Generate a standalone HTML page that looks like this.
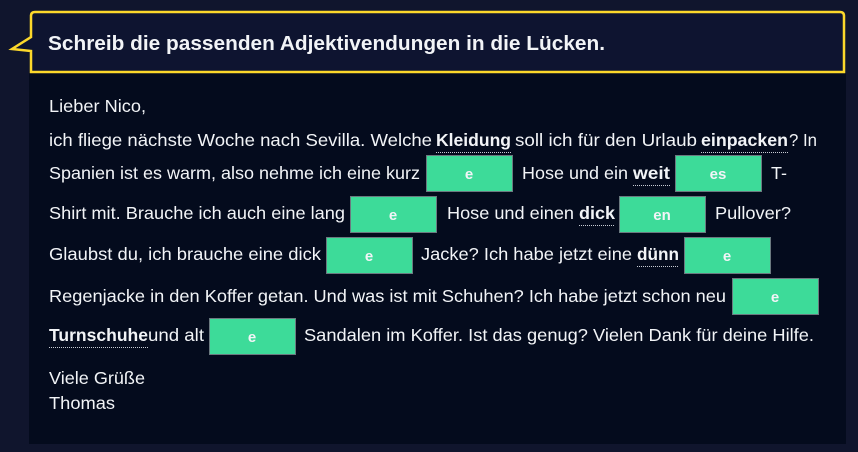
<!DOCTYPE html>
<html><head><meta charset="utf-8"><style>
html,body{margin:0;padding:0;background:#10152d;width:858px;height:452px;overflow:hidden}
svg{display:block}
text{font-family:"Liberation Sans",sans-serif;fill:#f2f4f7;font-size:17.5px}
.b{font-weight:bold}
.s{font-size:15px}
</style></head><body>
<svg width="858" height="452" viewBox="0 0 858 452">
<rect x="0" y="0" width="858" height="452" fill="#10152d"/>
<rect x="29" y="73" width="817" height="371" fill="#040b1d"/>
<path d="M31 37 V16 Q31 12 35 12 H840 Q844 12 844 16 V72 H31 V51 L12 49 L31 37 Z" fill="#0e1430" stroke="#fcd82b" stroke-width="2.5" stroke-linejoin="miter"/>
<text class="b" x="48" y="50" style="font-size:20.5px" textLength="557" lengthAdjust="spacingAndGlyphs">Schreib die passenden Adjektivendungen in die Lücken.</text>

<g stroke="#6b7a80" stroke-width="1" fill="#3ddb99">
<rect x="426.5" y="155.5" width="86" height="36"/>
<rect x="675.5" y="155.5" width="86" height="36"/>
<rect x="350.5" y="196.5" width="86" height="36"/>
<rect x="619.5" y="196.5" width="86" height="36"/>
<rect x="326.5" y="237.5" width="86" height="36"/>
<rect x="684.5" y="237.5" width="86" height="36"/>
<rect x="732.5" y="278.5" width="86" height="36"/>
<rect x="209.5" y="318.5" width="86" height="36"/>
</g>
<g text-anchor="middle">
<text x="469" y="179" class="b s">e</text>
<text x="718" y="179" class="b s">es</text>
<text x="393" y="220" class="b s">e</text>
<text x="662" y="220" class="b s">en</text>
<text x="369" y="261" class="b s">e</text>
<text x="727" y="261" class="b s">e</text>
<text x="775" y="302" class="b s">e</text>
<text x="252" y="342" class="b s">e</text>
</g>

<text x="49" y="112" textLength="97" lengthAdjust="spacingAndGlyphs">Lieber Nico,</text>

<text x="49" y="146" textLength="383" lengthAdjust="spacingAndGlyphs">ich fliege nächste Woche nach Sevilla. Welche</text>
<text class="b" x="436" y="146" textLength="75" lengthAdjust="spacingAndGlyphs">Kleidung</text>
<text x="515" y="146" textLength="182" lengthAdjust="spacingAndGlyphs">soll ich für den Urlaub</text>
<text class="b" x="701" y="146" textLength="87" lengthAdjust="spacingAndGlyphs">einpacken</text>
<text x="789" y="146" textLength="28" lengthAdjust="spacingAndGlyphs">? In</text>

<text x="49" y="179" textLength="371" lengthAdjust="spacingAndGlyphs">Spanien ist es warm, also nehme ich eine kurz</text>
<text x="522" y="179" textLength="106" lengthAdjust="spacingAndGlyphs">Hose und ein</text>
<text class="b" x="633" y="179" textLength="37" lengthAdjust="spacingAndGlyphs">weit</text>
<text x="771" y="179" textLength="16" lengthAdjust="spacingAndGlyphs">T-</text>

<text x="49" y="219" textLength="296" lengthAdjust="spacingAndGlyphs">Shirt mit. Brauche ich auch eine lang</text>
<text x="447" y="219" textLength="127" lengthAdjust="spacingAndGlyphs">Hose und einen</text>
<text class="b" x="579" y="219" textLength="36" lengthAdjust="spacingAndGlyphs">dick</text>
<text x="715" y="219" textLength="76" lengthAdjust="spacingAndGlyphs">Pullover?</text>

<text x="49" y="260" textLength="272" lengthAdjust="spacingAndGlyphs">Glaubst du, ich brauche eine dick</text>
<text x="421" y="260" textLength="211" lengthAdjust="spacingAndGlyphs">Jacke? Ich habe jetzt eine</text>
<text class="b" x="637" y="260" textLength="42" lengthAdjust="spacingAndGlyphs">dünn</text>

<text x="49" y="302" textLength="677" lengthAdjust="spacingAndGlyphs">Regenjacke in den Koffer getan. Und was ist mit Schuhen? Ich habe jetzt schon neu</text>

<text class="b" x="49" y="341" textLength="99" lengthAdjust="spacingAndGlyphs">Turnschuhe</text>
<text x="148" y="341" textLength="56" lengthAdjust="spacingAndGlyphs">und alt</text>
<text x="304" y="341" textLength="510" lengthAdjust="spacingAndGlyphs">Sandalen im Koffer. Ist das genug? Vielen Dank für deine Hilfe.</text>

<text x="49" y="384" textLength="96" lengthAdjust="spacingAndGlyphs">Viele Grüße</text>
<text x="49" y="409" textLength="66" lengthAdjust="spacingAndGlyphs">Thomas</text>

<g stroke="#c8ccd4" stroke-width="1" stroke-dasharray="1,1">
<line x1="436" y1="152.5" x2="511" y2="152.5"/>
<line x1="701" y1="152.5" x2="789" y2="152.5"/>
<line x1="633" y1="185.5" x2="670" y2="185.5"/>
<line x1="579" y1="225.5" x2="615" y2="225.5"/>
<line x1="637" y1="266.5" x2="679" y2="266.5"/>
<line x1="49" y1="347.5" x2="148" y2="347.5"/>
</g>
</svg>
</body></html>
